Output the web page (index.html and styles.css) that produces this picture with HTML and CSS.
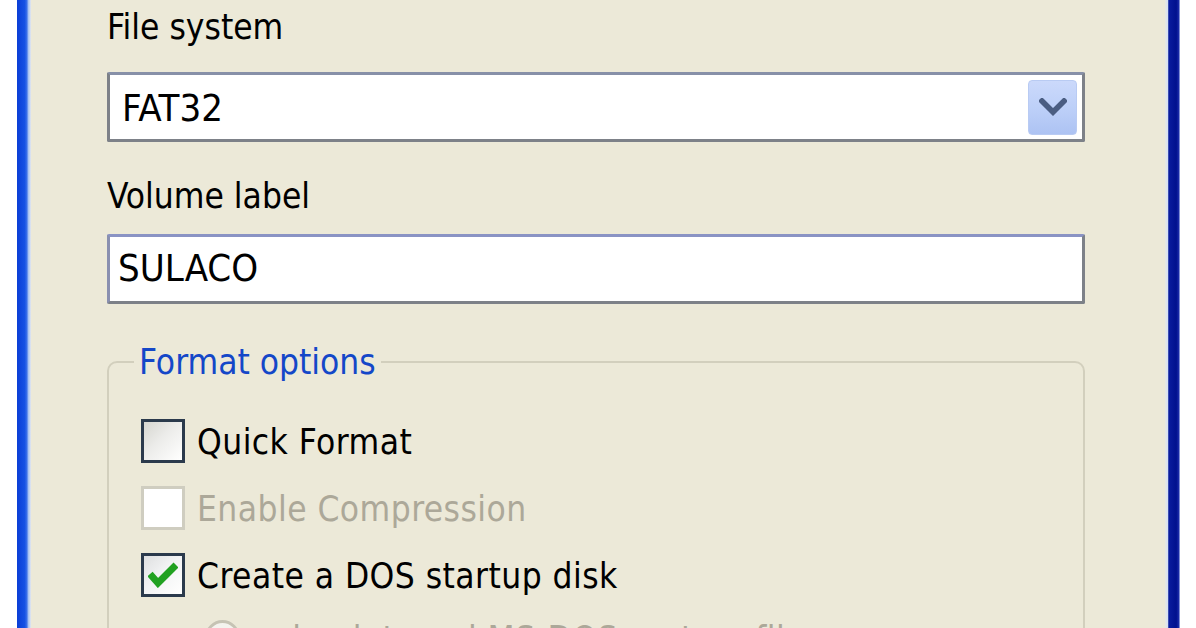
FILE: index.html
```html
<!DOCTYPE html>
<html>
<head>
<meta charset="utf-8">
<link rel="stylesheet" href="styles.css">
</head>
<body>
<div class="screen">
  <div class="edge-left"></div>
  <div class="frame-left"></div>
  <main class="dialog">
    <div class="label first">File system</div>
    <div class="combo">
      <span class="combo-value">FAT32</span>
      <span class="combo-btn">
        <svg width="28" height="18" viewBox="0 0 28 18"><path d="M3 3 L14 14 L25 3" fill="none" stroke="#4a5d82" stroke-width="5.5" stroke-linecap="square"/></svg>
      </span>
    </div>
    <div class="label second">Volume label</div>
    <div class="textbox">SULACO</div>
    <fieldset class="group">
      <legend class="group-title">Format options</legend>
      <div class="row">
        <span class="check"></span>
        <span class="row-text">Quick Format</span>
      </div>
      <div class="row disabled">
        <span class="check"></span>
        <span class="row-text">Enable Compression</span>
      </div>
      <div class="row">
        <span class="check checked">
          <svg width="30" height="26" viewBox="0 0 30 26"><path d="M2 12 L10 21 L28 3" fill="none" stroke="#21a121" stroke-width="7"/></svg>
        </span>
        <span class="row-text">Create a DOS startup disk</span>
      </div>
      <div class="row radio-row">
        <span class="radio"></span>
        <span class="row-text gray">using internal MS-DOS system files</span>
      </div>
    </fieldset>
  </main>
  <div class="frame-right"></div>
  <div class="edge-right"></div>
</div>
</body>
</html>
```

FILE: styles.css
```css
html, body {
  margin: 0;
  padding: 0;
  background: #ffffff;
}

.screen {
  display: flex;
  width: 1196px;
  height: 628px;
  overflow: hidden;
  font-family: "DejaVu Sans Condensed", "DejaVu Sans", sans-serif;
  color: #000;
  white-space: nowrap;
}

.edge-left {
  width: 17px;
  flex: none;
  background: #ffffff;
}

.frame-left {
  width: 14px;
  flex: none;
  background: linear-gradient(to right, #0a3dd6 0, #1650e4 55%, #3a6ee8 70%, #a9c2f2 82%, #e4e8ef 100%);
}

.dialog {
  width: 1134px;
  flex: none;
  background: #ece9d8;
  padding: 7px 80px 0 76px;
  box-sizing: border-box;
}

.frame-right {
  width: 15px;
  flex: none;
  background: linear-gradient(to right, #e8e9e2 0, #d8e2f2 18%, #0a1c9e 25%, #00108e 75%, #1a2aa8 92%, #c8d4f4 100%);
}

.edge-right {
  flex: 1;
  background: #ffffff;
}

.label {
  font-size: 35px;
  line-height: 40px;
  height: 40px;
}

.combo {
  margin-top: 25px;
  height: 70px;
  box-sizing: border-box;
  border: 3px solid #7d8188;
  border-top-color: #8790a8;
  border-radius: 2px;
  background: #ffffff;
  display: flex;
  align-items: center;
  padding: 0 5px 0 12px;
}

.combo-value {
  flex: 1;
  font-size: 38px;
  line-height: 40px;
  padding-top: 2px;
}

.combo-btn {
  width: 49px;
  height: 55px;
  box-sizing: border-box;
  border-radius: 4px;
  border: 1px solid #b9cbf3;
  background: linear-gradient(to bottom, #cbd9fb 0, #bccff8 55%, #adc3f3 100%);
  display: flex;
  align-items: center;
  justify-content: center;
}

.label.second {
  margin-top: 34px;
}

.textbox {
  margin-top: 18px;
  height: 70px;
  box-sizing: border-box;
  border: 3px solid #7d8188;
  border-top-color: #8a93c4;
  border-left-color: #8a90b0;
  border-radius: 2px;
  background: #ffffff;
  font-size: 38px;
  line-height: 62px;
  padding-left: 8px;
}

.group {
  margin: 38px 0 0 0;
  border: 2px solid #d2cfbd;
  border-radius: 10px;
  padding: 0 0 0 25px;
  min-width: 0;
}

.group-title {
  font-size: 35px;
  line-height: 40px;
  color: #1447c8;
  padding: 0 5px;
}

.row {
  display: flex;
  align-items: center;
  height: 67px;
  padding-left: 7px;
  gap: 12px;
  font-size: 35px;
  line-height: 40px;
  letter-spacing: 0.45px;
}

.group-title + .row {
  margin-top: 25px;
}

.check {
  width: 44px;
  height: 44px;
  box-sizing: border-box;
  border: 3px solid #2b3a4c;
  background: linear-gradient(135deg, #d6d6d0 0, #ececea 45%, #ffffff 100%);
  display: flex;
  align-items: center;
  justify-content: center;
  flex: none;
}

.check.checked {
  background: linear-gradient(135deg, #dedfe0 0, #f2f3f4 45%, #ffffff 100%);
}

.row.disabled .check {
  border-color: #cfcdc0;
  background: #ffffff;
}

.row.disabled .row-text,
.row-text.gray {
  color: #aca899;
}

.row-text {
  padding-top: 2px;
}

.radio-row {
  margin-top: -4px;
  padding-left: 71px;
  gap: 15px;
}

.radio {
  width: 35px;
  height: 35px;
  box-sizing: border-box;
  border-radius: 50%;
  border: 3px solid #c6c3b4;
  background: #f4f3ee;
  flex: none;
}
```
